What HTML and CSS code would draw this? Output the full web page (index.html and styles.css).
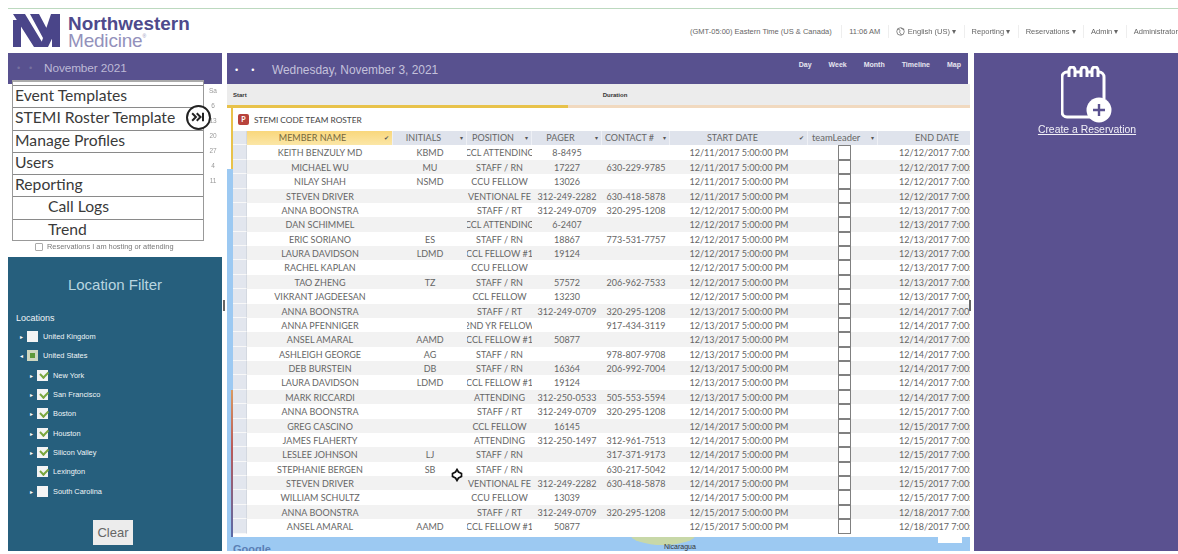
FILE: index.html
```html
<!DOCTYPE html>
<html lang="en">
<head>
<meta charset="utf-8">
<title>Northwestern Medicine</title>
<link rel="stylesheet" href="styles.css">
</head>
<body>
<div class="page">
  <header class="top">
    <div class="brand">
      <svg class="mark" viewBox="0 0 47 33"><path d="M0 6h8v27H0zM0 0h12l20 33H21zM17 0h9l8 15-4 9zM39 0h8v33h-8zM38 0h9v8L35 33h-8z"/></svg>
      <div class="wordmark"><span class="nw">Northwestern</span><span class="med">Medicine<sup>®</sup></span></div>
    </div>
    <nav class="nav">
      <span class="nav-item first">(GMT-05:00) Eastern Time (US &amp; Canada)</span>
      <span class="nav-item">11:06 AM</span>
      <span class="nav-item"><svg class="globe" viewBox="0 0 12 12"><circle cx="6" cy="6" r="5"/><path d="M2 3c3 0 4 1 3 3s2 2 2 5M7 1c0 2 2 2 4 2"/></svg>English (US) ▾</span>
      <span class="nav-item">Reporting ▾</span>
      <span class="nav-item">Reservations ▾</span>
      <span class="nav-item">Admin ▾</span>
      <span class="nav-item last">Administrator</span>
    </nav>
  </header>

  <div class="columns">
    <aside class="left">
      <div class="bar month"><span class="dots dim"><span>•</span><span>•</span></span><span>November 2021</span></div>
      <div class="calendar">
        <div class="sat"><span>Sa</span><span>6</span><span>13</span><span>20</span><span>27</span><span>4</span><span>11</span></div>
        <label class="hosting"><span class="tick"></span>Reservations I am hosting or attending</label>
      </div>
      <ul class="menu">
        <li>Event Templates</li>
        <li>STEMI Roster Template</li>
        <li>Manage Profiles</li>
        <li>Users</li>
        <li>Reporting</li>
        <li class="sub">Call Logs</li>
        <li class="sub">Trend</li>
      </ul>
      <span class="skip"><svg viewBox="0 0 16 12"><path d="M1 1.500l4.500 4.500-4.500 4.500M6.500 1.500l4.500 4.500-4.500 4.500"/><path d="M14 1v10"/></svg></span>
      <section class="filter">
        <h2>Location Filter</h2>
        <div class="loc-title">Locations</div>
        <ul class="tree">
          <li><i class="arrow">▸</i><b class="box"></b>United Kingdom</li>
          <li><i class="arrow">◂</i><b class="box part"></b>United States</li>
          <li class="in"><i class="arrow">▸</i><b class="box on"></b>New York</li>
          <li class="in"><i class="arrow">▸</i><b class="box on"></b>San Francisco</li>
          <li class="in"><i class="arrow">▸</i><b class="box on"></b>Boston</li>
          <li class="in"><i class="arrow">▸</i><b class="box on"></b>Houston</li>
          <li class="in"><i class="arrow">▸</i><b class="box on"></b>Silicon Valley</li>
          <li class="in"><i class="arrow"></i><b class="box on"></b>Lexington</li>
          <li class="in"><i class="arrow">▸</i><b class="box"></b>South Carolina</li>
        </ul>
        <button class="clear">Clear</button>
      </section>
    </aside>

    <main class="main">
      <div class="bar day">
        <span class="dots"><span>•</span><span>•</span></span><span class="date">Wednesday, November 3, 2021</span>
        <span class="views"><span>Day</span><span>Week</span><span>Month</span><span>Timeline</span><span>Map</span></span>
      </div>
      <div class="subbar"><span class="start">Start</span><span class="duration">Duration</span></div>
      <div class="sheet">
        <div class="progress"></div>
        <div class="sheet-title"><span class="ppt">P</span>STEMI CODE TEAM ROSTER</div>
        <div class="grid" id="grid">
          <div class="row head"><i></i><span class="c sel">MEMBER NAME<em>✔</em></span><span class="c">INITIALS<em>▾</em></span><span class="c">POSITION<em>▾</em></span><span class="c">PAGER<em>▾</em></span><span class="c">CONTACT #<em>▾</em></span><span class="c">START DATE<em>✔</em></span><span class="c lead">teamLeader<em>▾</em></span><span class="c endhead">END DATE</span></div>
          <div class="row"><i></i><span class="c">KEITH BENZULY MD</span><span class="c">KBMD</span><span class="c">CCL ATTENDING</span><span class="c">8-8495</span><span class="c"></span><span class="c">12/11/2017 5:00:00 PM</span><span class="c"><b></b></span><span class="c end">12/12/2017 7:00:00 AM</span></div>
          <div class="row"><i></i><span class="c">MICHAEL WU</span><span class="c">MU</span><span class="c">STAFF / RN</span><span class="c">17227</span><span class="c">630-229-9785</span><span class="c">12/11/2017 5:00:00 PM</span><span class="c"><b></b></span><span class="c end">12/12/2017 7:00:00 AM</span></div>
          <div class="row"><i></i><span class="c">NILAY SHAH</span><span class="c">NSMD</span><span class="c">CCU FELLOW</span><span class="c">13026</span><span class="c"></span><span class="c">12/11/2017 5:00:00 PM</span><span class="c"><b></b></span><span class="c end">12/12/2017 7:00:00 AM</span></div>
          <div class="row"><i></i><span class="c">STEVEN DRIVER</span><span class="c"></span><span class="c">VENTIONAL FE</span><span class="c">312-249-2282</span><span class="c">630-418-5878</span><span class="c">12/11/2017 5:00:00 PM</span><span class="c"><b></b></span><span class="c end">12/12/2017 7:00:00 AM</span></div>
          <div class="row"><i></i><span class="c">ANNA BOONSTRA</span><span class="c"></span><span class="c">STAFF / RT</span><span class="c">312-249-0709</span><span class="c">320-295-1208</span><span class="c">12/12/2017 5:00:00 PM</span><span class="c"><b></b></span><span class="c end">12/13/2017 7:00:00 AM</span></div>
          <div class="row"><i></i><span class="c">DAN SCHIMMEL</span><span class="c"></span><span class="c">CCL ATTENDING</span><span class="c">6-2407</span><span class="c"></span><span class="c">12/12/2017 5:00:00 PM</span><span class="c"><b></b></span><span class="c end">12/13/2017 7:00:00 AM</span></div>
          <div class="row"><i></i><span class="c">ERIC SORIANO</span><span class="c">ES</span><span class="c">STAFF / RN</span><span class="c">18867</span><span class="c">773-531-7757</span><span class="c">12/12/2017 5:00:00 PM</span><span class="c"><b></b></span><span class="c end">12/13/2017 7:00:00 AM</span></div>
          <div class="row"><i></i><span class="c">LAURA DAVIDSON</span><span class="c">LDMD</span><span class="c">CCL FELLOW #1</span><span class="c">19124</span><span class="c"></span><span class="c">12/12/2017 5:00:00 PM</span><span class="c"><b></b></span><span class="c end">12/13/2017 7:00:00 AM</span></div>
          <div class="row"><i></i><span class="c">RACHEL KAPLAN</span><span class="c"></span><span class="c">CCU FELLOW</span><span class="c"></span><span class="c"></span><span class="c">12/12/2017 5:00:00 PM</span><span class="c"><b></b></span><span class="c end">12/13/2017 7:00:00 AM</span></div>
          <div class="row"><i></i><span class="c">TAO ZHENG</span><span class="c">TZ</span><span class="c">STAFF / RN</span><span class="c">57572</span><span class="c">206-962-7533</span><span class="c">12/12/2017 5:00:00 PM</span><span class="c"><b></b></span><span class="c end">12/13/2017 7:00:00 AM</span></div>
          <div class="row"><i></i><span class="c">VIKRANT JAGDEESAN</span><span class="c"></span><span class="c">CCL FELLOW</span><span class="c">13230</span><span class="c"></span><span class="c">12/12/2017 5:00:00 PM</span><span class="c"><b></b></span><span class="c end">12/13/2017 7:00:00 AM</span></div>
          <div class="row"><i></i><span class="c">ANNA BOONSTRA</span><span class="c"></span><span class="c">STAFF / RT</span><span class="c">312-249-0709</span><span class="c">320-295-1208</span><span class="c">12/13/2017 5:00:00 PM</span><span class="c"><b></b></span><span class="c end">12/14/2017 7:00:00 AM</span></div>
          <div class="row"><i></i><span class="c">ANNA PFENNIGER</span><span class="c"></span><span class="c">2ND YR FELLOW</span><span class="c"></span><span class="c">917-434-3119</span><span class="c">12/13/2017 5:00:00 PM</span><span class="c"><b></b></span><span class="c end">12/14/2017 7:00:00 AM</span></div>
          <div class="row"><i></i><span class="c">ANSEL AMARAL</span><span class="c">AAMD</span><span class="c">CCL FELLOW #1</span><span class="c">50877</span><span class="c"></span><span class="c">12/13/2017 5:00:00 PM</span><span class="c"><b></b></span><span class="c end">12/14/2017 7:00:00 AM</span></div>
          <div class="row"><i></i><span class="c">ASHLEIGH GEORGE</span><span class="c">AG</span><span class="c">STAFF / RN</span><span class="c"></span><span class="c">978-807-9708</span><span class="c">12/13/2017 5:00:00 PM</span><span class="c"><b></b></span><span class="c end">12/14/2017 7:00:00 AM</span></div>
          <div class="row"><i></i><span class="c">DEB BURSTEIN</span><span class="c">DB</span><span class="c">STAFF / RN</span><span class="c">16364</span><span class="c">206-992-7004</span><span class="c">12/13/2017 5:00:00 PM</span><span class="c"><b></b></span><span class="c end">12/14/2017 7:00:00 AM</span></div>
          <div class="row"><i></i><span class="c">LAURA DAVIDSON</span><span class="c">LDMD</span><span class="c">CCL FELLOW #1</span><span class="c">19124</span><span class="c"></span><span class="c">12/13/2017 5:00:00 PM</span><span class="c"><b></b></span><span class="c end">12/14/2017 7:00:00 AM</span></div>
          <div class="row"><i></i><span class="c">MARK RICCARDI</span><span class="c"></span><span class="c">ATTENDING</span><span class="c">312-250-0533</span><span class="c">505-553-5594</span><span class="c">12/13/2017 5:00:00 PM</span><span class="c"><b></b></span><span class="c end">12/14/2017 7:00:00 AM</span></div>
          <div class="row"><i></i><span class="c">ANNA BOONSTRA</span><span class="c"></span><span class="c">STAFF / RT</span><span class="c">312-249-0709</span><span class="c">320-295-1208</span><span class="c">12/14/2017 5:00:00 PM</span><span class="c"><b></b></span><span class="c end">12/15/2017 7:00:00 AM</span></div>
          <div class="row"><i></i><span class="c">GREG CASCINO</span><span class="c"></span><span class="c">CCL FELLOW</span><span class="c">16145</span><span class="c"></span><span class="c">12/14/2017 5:00:00 PM</span><span class="c"><b></b></span><span class="c end">12/15/2017 7:00:00 AM</span></div>
          <div class="row"><i></i><span class="c">JAMES FLAHERTY</span><span class="c"></span><span class="c">ATTENDING</span><span class="c">312-250-1497</span><span class="c">312-961-7513</span><span class="c">12/14/2017 5:00:00 PM</span><span class="c"><b></b></span><span class="c end">12/15/2017 7:00:00 AM</span></div>
          <div class="row"><i></i><span class="c">LESLEE JOHNSON</span><span class="c">LJ</span><span class="c">STAFF / RN</span><span class="c"></span><span class="c">317-371-9173</span><span class="c">12/14/2017 5:00:00 PM</span><span class="c"><b></b></span><span class="c end">12/15/2017 7:00:00 AM</span></div>
          <div class="row"><i></i><span class="c">STEPHANIE BERGEN</span><span class="c">SB</span><span class="c">STAFF / RN</span><span class="c"></span><span class="c">630-217-5042</span><span class="c">12/14/2017 5:00:00 PM</span><span class="c"><b></b></span><span class="c end">12/15/2017 7:00:00 AM</span></div>
          <div class="row"><i></i><span class="c">STEVEN DRIVER</span><span class="c"></span><span class="c">VENTIONAL FE</span><span class="c">312-249-2282</span><span class="c">630-418-5878</span><span class="c">12/14/2017 5:00:00 PM</span><span class="c"><b></b></span><span class="c end">12/15/2017 7:00:00 AM</span></div>
          <div class="row"><i></i><span class="c">WILLIAM SCHULTZ</span><span class="c"></span><span class="c">CCU FELLOW</span><span class="c">13039</span><span class="c"></span><span class="c">12/14/2017 5:00:00 PM</span><span class="c"><b></b></span><span class="c end">12/15/2017 7:00:00 AM</span></div>
          <div class="row"><i></i><span class="c">ANNA BOONSTRA</span><span class="c"></span><span class="c">STAFF / RT</span><span class="c">312-249-0709</span><span class="c">320-295-1208</span><span class="c">12/15/2017 5:00:00 PM</span><span class="c"><b></b></span><span class="c end">12/18/2017 7:00:00 AM</span></div>
          <div class="row"><i></i><span class="c">ANSEL AMARAL</span><span class="c">AAMD</span><span class="c">CCL FELLOW #1</span><span class="c">50877</span><span class="c"></span><span class="c">12/15/2017 5:00:00 PM</span><span class="c"><b></b></span><span class="c end">12/18/2017 7:00:00 AM</span></div>
        </div>
        <svg class="cursor" viewBox="0 0 14 14"><path d="M7 1.500l1.500 2.500 3 1.500v3l-3 1.500-1.500 2.500-1.500-2.500-3-1.500v-3l3-1.500z"/></svg>
        <span class="edge-top"></span>
        <span class="edge-low"></span>
        <div class="map"><span class="google">Google</span><span class="land"></span><span class="nic">Nicaragua</span><span class="scale"></span></div>
      </div>
      <span class="grip grip-l"></span>
      <span class="grip grip-r"></span>
    </main>

    <aside class="right">
      <svg class="cal" viewBox="0 0 52 57"><path d="M30 51H6a5 5 0 0 1-5-5V11a5 5 0 0 1 5-5h32a5 5 0 0 1 5 5v22"/><path class="ring" d="M8 11V4a3 3 0 0 1 6 0v7M20 11V4a3 3 0 0 1 6 0v7M31 11V4a3 3 0 0 1 6 0v7"/><circle class="disc" cx="38" cy="44" r="12.500"/><path class="plus" d="M38 38v12M32 44h12"/></svg>
      <a class="create">Create a Reservation</a>
    </aside>
  </div>
</div>
</body>
</html>
```

FILE: styles.css
```css
* { box-sizing: border-box; }
html, body { margin: 0; height: 100%; background: #fff; }
body { overflow: hidden; }
.page {
  width: 1178px; height: 554px; overflow: hidden;
  font-family: "Liberation Sans", Arial, sans-serif;
  filter: blur(0.6px);
}
.top {
  margin: 8px 0 0 8px; height: 45px; padding-top: 5px;
  display: flex; align-items: flex-start;
  border-top: 1px solid #bcd9bf;
  background: #fff;
}
.brand { flex: 0 0 675px; display: flex; gap: 8px; padding-left: 5px; }
.mark { width: 47px; height: 33px; fill: #4a4589; }
.wordmark { display: flex; flex-direction: column; color: #4e4a8c; line-height: 1; }
.nw { font-size: 18.9px; font-weight: 700; height: 19px; line-height: 19px; }
.med { font-size: 19px; color: #9391bb; height: 15px; line-height: 15px; letter-spacing: -.2px; }
.med sup { font-size: 5px; vertical-align: 9px; line-height: 0; }
.nav {
  flex: none; display: flex; align-items: center; margin-top: 11px;
  font-size: 7.5px; color: #666; white-space: nowrap;
}
.nav-item { padding: 0 7.500px 0 7px; border-right: 1px solid #eee; height: 13px; line-height: 13px; display: flex; align-items: center; }
.nav-item.first { padding-right: 9.500px; }
.nav-item.last { border: 0; }
.globe { width: 9px; height: 9px; margin-right: 3px; fill: none; stroke: #666; stroke-width: 1; }

.columns {
  display: grid; grid-template-columns: 215px 743px 204px; column-gap: 4px;
  margin-left: 8px; height: 498px; align-items: stretch;
}
.bar { background: #58518f; color: #cfcde0; height: 31px; display: flex; align-items: center; }

.left { position: relative; display: flex; flex-direction: column; margin-right: 1px; }
.month { font-size: 11.800px; color: #bdb9d6; gap: 6px; padding: 0 0 2px 9px; height: 31px; letter-spacing: -.1px; }
.dots { font-size: 9px; color: #fff; display: inline-flex; gap: 13px; width: 21px; }
.dots.dim { color: #77719f; gap: 9px; }
.calendar { flex: none; height: 173px; position: relative; background: #fff; }
.sat {
  display: flex; flex-direction: column; align-items: center;
  position: absolute; right: 3px; top: 0; width: 12px;
  font-size: 6.5px; color: #999; padding-top: 4px; row-gap: 9px; line-height: 6px;
}
.hosting { position: absolute; left: 27px; bottom: 6px; font-size: 7.4px; color: #777; display: flex; align-items: center; gap: 4px; white-space: nowrap; }
.tick { width: 8px; height: 8px; border: 1px solid #aaa; border-radius: 1px; }

.menu {
  position: absolute; left: 4px; top: 27px; width: 192px; height: 161px;
  margin: 0; padding: 3px 0 0; list-style: none; background: #fff;
  border: 1px solid #999; border-top: 2px solid #aaa;
  font-family: Lato, "Open Sans", sans-serif; font-size: 15.700px; color: #3a3a3a;
}
.menu li { height: 22.300px; line-height: 18px; padding-left: 2px; border-top: 1px solid #8a8a8a; white-space: nowrap; }
.menu li.sub { padding-left: 35px; }
.skip {
  position: absolute; left: 177.500px; top: 51.500px; width: 25px; height: 25px;
  border: 2.500px solid #222; border-radius: 50%; background: #fff;
  display: flex; align-items: center; justify-content: center;
}
.skip svg { width: 14px; height: 10px; fill: none; stroke: #222; stroke-width: 2.400; }

.filter { flex: 1; background: #265f7d; color: #f0f5f7; position: relative; height: 294px; }
.filter h2 { margin: 19px 0 0; text-align: center; font-weight: 400; font-size: 15px; color: #b9d6e0; line-height: 18px; }
.loc-title { font-size: 9px; margin: 19px 0 0 8px; line-height: 10px; }
.tree { list-style: none; margin: 0; padding: 4px 0 0 12px; font-size: 7.400px; font-weight: 400; }
.tree li { height: 19.300px; display: flex; align-items: center; white-space: nowrap; }
.tree li.in { padding-left: 10px; }
.arrow { width: 7px; font-style: normal; font-size: 6px; color: #fff; text-align: left; }
.box { width: 11px; height: 11px; background: #f4f4f4; margin-right: 5px; position: relative; flex: none; }
.box.on::after { content: ""; position: absolute; left: 2.500px; top: 1.500px; width: 6px; height: 3.500px; border-left: 2px solid #7aa63f; border-bottom: 2px solid #7aa63f; transform: rotate(-45deg); }
.box.part { background: #cfd8c0; }
.box.part::after { content: ""; position: absolute; left: 3px; top: 3px; width: 5px; height: 5px; background: #5f9a3a; }
.clear {
  position: absolute; left: 85px; bottom: 6px; width: 40px; height: 25px; padding: 0;
  border: 0; background: #ececec; color: #666; font: 13px "Liberation Sans", Arial, sans-serif;
}

.main { display: flex; flex-direction: column; min-width: 0; background: #fff; position: relative; }
.day { height: 31px; margin-right: 2px; padding: 2px 0 0 8px; font-size: 11.900px; color: #c4c1db; }
.day .dots { width: 30px; gap: 13px; }
.date { margin-left: 7px; }
.views { margin-left: auto; padding-right: 7px; align-self: flex-start; margin-top: 6px; display: flex; gap: 17px; font-size: 7px; font-weight: 700; color: #e6e5f0; }
.subbar { height: 21px; background: #ececec; display: flex; align-items: center; font-size: 6px; font-weight: 700; color: #333; padding-left: 6px; }
.duration { margin-left: 356px; }
.sheet { flex: 1; position: relative; display: flex; flex-direction: column; background: linear-gradient(#fff 64px, #9cc9f2 64px); overflow: hidden; }
.progress { height: 3px; flex: none; background: linear-gradient(90deg, #e8c24a 0, #e8c24a 341px, #f1d9bf 341px); }
.sheet-title { height: 23px; flex: none; margin-left: 6px; background: #fff; display: flex; align-items: center; gap: 5px; font: 8.300px Lato, sans-serif; color: #444; padding-left: 5px; }
.ppt { width: 11px; height: 11px; border-radius: 2px; background: #b8433c; color: #fff; font-size: 7px; font-weight: 700; text-align: center; line-height: 11px; }
.grid { flex: none; margin-left: 6px; background: #fff; height: 406px; overflow: hidden; }
.row {
  display: grid; grid-template-columns: 14px 146px 74px 65px 70px 68px 138px 70px 92px;
  height: 14.380px; font: 9px/14.380px Lato, "Open Sans", sans-serif; color: #666;
}
.row:nth-child(odd) { background: #f2f2f2; }
.row > i { background: #e2e6ee; border-bottom: 1px solid #f8f8f8; border-right: 1px solid #d3d8e0; }
.c { display: flex; justify-content: center; overflow: hidden; white-space: nowrap; min-width: 0; position: relative; padding-top: 1px; }
.c.end { justify-content: flex-start; padding-left: 21px; }
.c b { width: 13px; height: 14.380px; margin: -1px 0 0 3px; background: #fff; border: 1.500px solid #808080; flex: none; }
.row.head { background: #dfe3ec; color: #666; }
.row.head .c { border-right: 1px solid #eef0f5; padding-top: 0; padding-right: 12px; }
.c em { position: absolute; right: 3px; top: 0; font-size: 6px; font-style: normal; color: #555; }
.row.head .c.sel { background: linear-gradient(#f9d77c, #fbe6a6); color: #75673c; padding-right: 14px; }
.row.head .c.lead { font-size: 9.400px; justify-content: flex-start; padding: 0 0 0 4px; }
.row.head .c.endhead { padding: 0 0 0 26px; border: 0; }
.cursor { position: absolute; left: 223px; top: 363px; width: 14px; height: 14px; fill: #fff; stroke: #111; stroke-width: 1.700; }
.edge-top { position: absolute; left: 4px; top: 0; width: 2px; height: 64px; background: #e8c24a; }
.edge-low { position: absolute; left: 4px; top: 285px; width: 2px; height: 147px; background: linear-gradient(#d99a63, #b85a5a 40%, #5a6aa8); }
.map { position: relative; flex: 1; background: #9cc9f2; overflow: hidden; }
.google { position: absolute; left: 6px; top: 6px; font-size: 11px; color: #5a7fb5; font-weight: 700; }
.land { position: absolute; left: 403px; top: -14px; width: 66px; height: 22px; border-radius: 50%; background: #c8d8a8; }
.nic { position: absolute; left: 437px; top: 6px; font-size: 7px; color: #333; }
.scale { position: absolute; left: 711px; top: 0; width: 24px; height: 6px; background: #fff; }
.grip { position: absolute; top: 247px; width: 2px; height: 11px; background: #666; }
.grip-l { left: -4px; }
.grip-r { right: -1px; }

.right { background: #5a5190; color: #fff; display: flex; flex-direction: column; align-items: center; padding-left: 22px; }
.cal { width: 52px; height: 57px; margin-top: 13px; fill: none; stroke: #fff; stroke-width: 3; }
.cal .ring { fill: #5a5190; }
.cal .disc { fill: #fff; stroke: none; }
.cal .plus { stroke: #5a5190; stroke-width: 2.400; }
.create { font-size: 10.400px; text-decoration: underline; margin-top: 1px; color: #f1f0f7; }
```
